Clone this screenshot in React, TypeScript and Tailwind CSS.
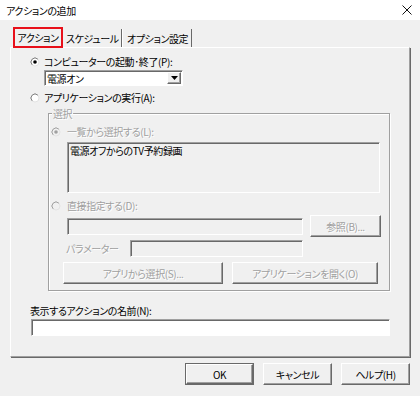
import React from "react";

const sunken =
  "border border-t-[#a0a0a0] border-l-[#a0a0a0] border-b-white border-r-white shadow-[inset_1px_1px_0_#696969]";
const raised =
  "border border-t-white border-l-white border-b-[#696969] border-r-[#696969] shadow-[inset_-1px_-1px_0_#a0a0a0]";
const dim = "text-[#a0a0a0] [text-shadow:1px_1px_0_#fff]";

function Radio({ checked, disabled }: { checked?: boolean; disabled?: boolean }) {
  return (
    <svg width="10" height="10" viewBox="0 0 10 10" className="shrink-0">
      <circle cx="5" cy="5" r="4" fill={disabled ? "#f0f0f0" : "#fff"} stroke="#e3e3e3" />
      <path d="M7.83 2.17 A4 4 0 0 0 2.17 7.83" fill="none" stroke={disabled ? "#a0a0a0" : "#808080"} />
      {checked && <circle cx="5" cy="5" r="1.8" fill={disabled ? "#a0a0a0" : "#000"} />}
    </svg>
  );
}

function Button({ label, w, disabled }: { label: string; w: string; disabled?: boolean }) {
  return (
    <div className={`${w} h-[22px] ${raised} flex items-center justify-center whitespace-nowrap ${disabled ? dim : "text-black"}`}>
      {label}
    </div>
  );
}

export default function App() {
  return (
    <div className="w-[420px] h-[396px] bg-[#f0f0f0] text-[10px] leading-[13px] tracking-[-0.4px] text-black font-['Noto_Sans_CJK_JP',sans-serif] [font-feature-settings:'palt'] overflow-hidden">
      {/* タイトルバー */}
      <div className="h-[20px] bg-white flex items-center justify-between pl-[6px] pr-[8px]">
        <span>アクションの追加</span>
        <svg width="10" height="10" viewBox="0 0 10 10">
          <path d="M0.5 0.5 L9.5 9.5 M9.5 0.5 L0.5 9.5" stroke="#111" strokeWidth="1" />
        </svg>
      </div>

      {/* タブ */}
      <div className="mt-[7px] h-[20px] pl-[13px] flex items-start whitespace-nowrap">
        <div className="w-[50px] h-[21px] border-2 border-[#e8101a] flex items-center justify-center relative z-10">
          アクション
        </div>
        <div className="w-[59px] h-[18px] mt-[2px] pl-[3px] flex items-center border-r border-r-[#696969]">
          スケジュール
        </div>
        <div className="w-[70px] h-[18px] mt-[2px] pl-[4px] flex items-center border-r border-r-[#696969] border-l border-l-white">
          オプション設定
        </div>
      </div>

      {/* パネル */}
      <div className="ml-[10px] w-[400px] h-[310px] border border-t-white border-l-white border-b-[#a0a0a0] border-r-[#a0a0a0] shadow-[1px_1px_0_#696969] flex flex-col whitespace-nowrap">
        <div className="mt-[7px] ml-[19px] h-[13px] flex items-center gap-[4px]">
          <Radio checked />
          <span>コンピューターの起動･終了(P):</span>
        </div>

        <div className={`mt-[2px] ml-[33px] w-[139px] h-[16px] bg-white ${sunken} flex items-center justify-between pl-[2px]`}>
          <span>電源オン</span>
          <div className={`w-[14px] h-[12px] mr-[1px] bg-[#f0f0f0] ${raised} flex items-center justify-center`}>
            <svg width="7" height="4" viewBox="0 0 7 4">
              <path d="M0 0 H7 L3.5 4 Z" fill="#000" />
            </svg>
          </div>
        </div>

        <div className="mt-[5px] ml-[19px] h-[13px] flex items-center gap-[4px]">
          <Radio />
          <span>アプリケーションの実行(A):</span>
        </div>

        {/* 選択グループ */}
        <div className="mt-[9px] ml-[37px] w-[342px] h-[178px] border border-[#a0a0a0] shadow-[1px_1px_0_#fff,inset_1px_1px_0_#fff] flex flex-col">
          <div className={`-mt-[7px] ml-[3px] px-[1px] w-fit h-[13px] bg-[#f0f0f0] ${dim}`}>選択</div>

          <div className="mt-[5px] ml-[2px] h-[13px] flex items-center gap-[6px]">
            <Radio checked disabled />
            <span className={dim}>一覧から選択する(L):</span>
          </div>

          <div className={`mt-[4px] ml-[18px] w-[313px] h-[51px] ${sunken} pl-[2px] pt-[1px]`}>
            電源オフからのTV予約録画
          </div>

          <div className="mt-[6px] ml-[2px] h-[13px] flex items-center gap-[6px]">
            <Radio disabled />
            <span className={dim}>直接指定する(D):</span>
          </div>

          <div className="mt-[3px] ml-[18px] flex items-center gap-[7px]">
            <div className={`w-[236px] h-[17px] ${sunken}`} />
            <Button label="参照(B)..." w="w-[71px]" disabled />
          </div>

          <div className="mt-[3px] ml-[17px] flex items-center">
            <span className={`w-[64px] ${dim}`}>パラメーター</span>
            <div className={`w-[173px] h-[17px] ${sunken}`} />
          </div>

          <div className="mt-[5px] ml-[14px] flex items-center gap-[9px]">
            <Button label="アプリから選択(S)..." w="w-[160px]" disabled />
            <Button label="アプリケーションを開く(O)" w="w-[146px]" disabled />
          </div>
        </div>

        <div className="mt-[13px] ml-[19px] h-[13px]">表示するアクションの名前(N):</div>
        <div className={`mt-[2px] ml-[20px] w-[359px] h-[17px] bg-white ${sunken}`} />
      </div>

      {/* ボタン */}
      <div className="mt-[6px] pr-[10px] flex justify-end gap-[9px]">
        <div className="w-[69px] h-[22px] border border-[#696969] flex">
          <div className={`flex-1 ${raised} flex items-center justify-center`}>OK</div>
        </div>
        <Button label="キャンセル" w="w-[69px]" />
        <Button label="ヘルプ(H)" w="w-[69px]" />
      </div>
    </div>
  );
}
